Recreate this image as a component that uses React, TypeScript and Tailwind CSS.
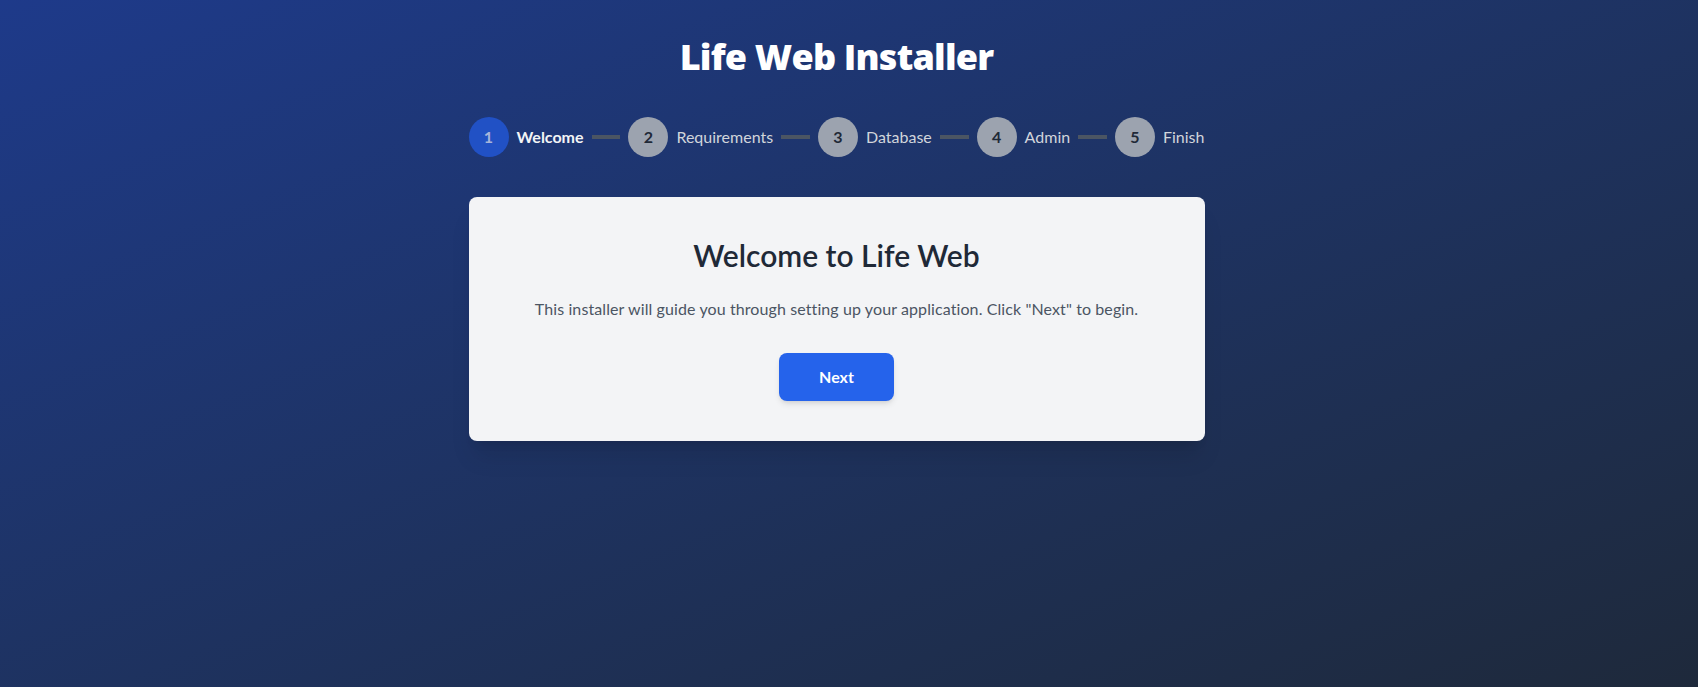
import { Fragment } from "react";

const steps = [
  { id: 1, label: "Welcome" },
  { id: 2, label: "Requirements" },
  { id: 3, label: "Database" },
  { id: 4, label: "Admin" },
  { id: 5, label: "Finish" },
];

const Stepper = ({ current }: { current: number }) => {
  return (
    <div className="mb-10 flex items-center">
      {steps.map((step, i) => {
        const active = step.id === current;

        return (
          <Fragment key={step.id}>
            <div className="flex items-center gap-2">
              <div
                className={`flex h-10 w-10 shrink-0 items-center justify-center rounded-full text-base font-bold ${
                  active
                    ? "bg-[#2151c5] text-[#a7b4da]"
                    : "bg-[#9ca3af] text-[#1f2937]"
                }`}
              >
                {step.id}
              </div>
              <span
                className={`whitespace-nowrap text-base ${
                  active ? "font-bold text-[#f3f4f6]" : "text-[#d1d5db]"
                }`}
              >
                {step.label}
              </span>
            </div>
            {i < steps.length - 1 && (
              <div className="mx-2 h-1 flex-1 bg-[#4b5563]" />
            )}
          </Fragment>
        );
      })}
    </div>
  );
};

export default function App() {
  return (
    <div className="min-h-screen bg-gradient-to-br from-[#1e3a8a] to-[#1e293b] pr-[25px] font-['Lato','Liberation_Sans',sans-serif]">
      <div className="mx-auto max-w-3xl px-4 pt-[37px]">
        <h1 className="mb-10 text-center font-['Open_Sans',sans-serif] text-4xl font-extrabold tracking-[-0.8px] text-white">
          Life Web Installer
        </h1>

        <Stepper current={1} />

        <div className="rounded-lg bg-[#f3f4f6] p-10 text-center shadow-xl">
          <h2 className="mb-6 text-3xl font-semibold text-[#1f2937]">
            Welcome to Life Web
          </h2>
          <p className="mb-8 text-base tracking-[0.1px] text-[#4b5563]">
            This installer will guide you through setting up your application.
            Click "Next" to begin.
          </p>
          <button className="rounded-lg bg-[#2563eb] px-10 py-3 text-base font-bold text-white shadow-md">
            Next
          </button>
        </div>
      </div>
    </div>
  );
}
